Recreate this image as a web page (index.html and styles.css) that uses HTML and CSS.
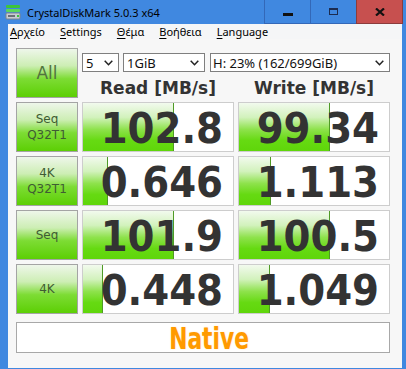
FILE: index.html
```html
<!DOCTYPE html>
<html>
<head>
    <meta charset="utf-8">
    <title>CrystalDiskMark 5.0.3 x64</title>
    <link rel="stylesheet" href="styles.css">
</head>
<body>
    <div class="window">
        <div class="titlebar">
            <svg class="app-icon" width="16" height="16" viewBox="0 0 16 16">
                <rect x="1" y="1" width="14" height="3" rx="1" fill="#3cc43c"/>
                <rect x="1" y="5" width="14" height="3" rx="1" fill="#5ad65a"/>
                <rect x="1" y="9" width="14" height="6" rx="1" fill="#c8cdd2" stroke="#7d848c"/>
                <rect x="3" y="11" width="7" height="2" fill="#6a7078"/>
                <rect x="12" y="11" width="2" height="2" fill="#3cc43c"/>
            </svg>
            <span class="title">CrystalDiskMark 5.0.3 x64</span>
            <div class="caption-buttons">
                <div class="cap-btn"><span class="glyph-min"></span></div>
                <div class="cap-btn"><span class="glyph-max"></span></div>
                <div class="cap-btn close">
                    <svg width="10" height="8" viewBox="0 0 10 8">
                        <path d="M1 0.5 L9 7.5 M9 0.5 L1 7.5" stroke="#111" stroke-width="2.2"/>
                    </svg>
                </div>
            </div>
        </div>

        <div class="menubar">
            <span class="menu-item"><u>Α</u>ρχείο</span>
            <span class="menu-item"><u>S</u>ettings</span>
            <span class="menu-item"><u>Θ</u>έμα</span>
            <span class="menu-item"><u>Β</u>οήθεια</span>
            <span class="menu-item"><u>L</u>anguage</span>
        </div>

        <div class="client">
            <div class="bench">
                <div class="label all">All</div>
                <div class="controls">
                    <div class="combo-row">
                        <div class="combo combo-count">
                            <span>5</span>
                            <svg class="chevron" width="9" height="6" viewBox="0 0 9 6"><polyline points="0.7,0.7 4.5,4.7 8.3,0.7" fill="none" stroke="#222" stroke-width="1.5"/></svg>
                        </div>
                        <div class="combo combo-size">
                            <span>1GiB</span>
                            <svg class="chevron" width="9" height="6" viewBox="0 0 9 6"><polyline points="0.7,0.7 4.5,4.7 8.3,0.7" fill="none" stroke="#222" stroke-width="1.5"/></svg>
                        </div>
                        <div class="combo combo-drive">
                            <span>H: 23% (162/699GiB)</span>
                            <svg class="chevron" width="9" height="6" viewBox="0 0 9 6"><polyline points="0.7,0.7 4.5,4.7 8.3,0.7" fill="none" stroke="#222" stroke-width="1.5"/></svg>
                        </div>
                    </div>
                    <div class="heads">
                        <div class="head">Read [MB/s]</div>
                        <div class="head">Write [MB/s]</div>
                    </div>
                </div>

                <div class="label">Seq<br>Q32T1</div>
                <div class="cell"><div class="bar" style="width: 90px"></div><span class="value">102.8</span></div>
                <div class="cell"><div class="bar" style="width: 90px"></div><span class="value">99.34</span></div>

                <div class="label">4K<br>Q32T1</div>
                <div class="cell"><div class="bar" style="width: 24px"></div><span class="value">0.646</span></div>
                <div class="cell"><div class="bar" style="width: 31px"></div><span class="value">1.113</span></div>

                <div class="label">Seq</div>
                <div class="cell"><div class="bar" style="width: 90px"></div><span class="value">101.9</span></div>
                <div class="cell"><div class="bar" style="width: 90px"></div><span class="value">100.5</span></div>

                <div class="label">4K</div>
                <div class="cell"><div class="bar" style="width: 19px"></div><span class="value">0.448</span></div>
                <div class="cell"><div class="bar" style="width: 30px"></div><span class="value">1.049</span></div>

                <div class="native"><span>Native</span></div>
            </div>
        </div>
    </div>
</body>
</html>
```

FILE: styles.css
```css
body {
    margin: 0;
    font-family: "Noto Sans", sans-serif;
}
.window {
    width: 406px;
    height: 369px;
    box-sizing: border-box;
    background-color: #4088e0;
    padding: 0 4px 4px 8px;
    display: flex;
    flex-direction: column;
}
.titlebar {
    height: 25px;
    margin-left: -8px;
    margin-right: -4px;
    display: flex;
    align-items: center;
}
.app-icon {
    margin-left: 5px;
    margin-top: -1px;
}
.title {
    margin-left: 6px;
    font-size: 11px;
    color: #000;
}
.caption-buttons {
    margin-left: auto;
    margin-right: 3px;
    display: flex;
    align-self: flex-start;
}
.cap-btn {
    width: 45px;
    height: 23px;
    border: 1px solid #3368b8;
    border-top: none;
    margin-left: -1px;
    display: flex;
    align-items: center;
    justify-content: center;
}
.cap-btn.close {
    background-color: #c7504f;
    border-color: #8c3c3c;
}
.glyph-min {
    width: 10px;
    height: 3px;
    margin-top: 5px;
    background-color: #111;
}
.glyph-max {
    width: 7px;
    height: 4px;
    border: 1.5px solid #1c2c50;
    border-top-width: 2px;
}
.menubar {
    height: 20px;
    background-color: #f5f6f7;
    display: flex;
    align-items: center;
    gap: 15px;
    padding-left: 2px;
    font-size: 11px;
    color: #000;
}
.menu-item u {
    text-decoration-thickness: 1px;
    text-underline-offset: 2px;
}
.client {
    flex: 1;
    background-color: #f7f7f7;
    padding: 9px 12px 0 8px;
}
.bench {
    display: grid;
    grid-template-columns: 62px 152px 152px;
    grid-auto-rows: 50px;
    gap: 4px;
}
.label {
    box-sizing: border-box;
    border: 1px solid #a4a4a4;
    background: linear-gradient(#eef6ea 0%, #cdeeb4 35%, #7ddc34 62%, #5ccf04 100%);
    color: #3f5c33;
    font-family: "DejaVu Sans", sans-serif;
    font-size: 12px;
    line-height: 16px;
    text-align: center;
    display: flex;
    align-items: center;
    justify-content: center;
}
.label.all {
    font-size: 17px;
    color: #52743f;
}
.controls {
    grid-column: 2 / 4;
    display: flex;
    flex-direction: column;
}
.combo-row {
    display: flex;
    gap: 4px;
    margin-top: 5px;
}
.combo {
    box-sizing: border-box;
    height: 19px;
    border: 1px solid #7f7f7f;
    background-color: #fff;
    display: flex;
    align-items: center;
    padding-left: 3px;
    font-size: 13px;
    color: #111;
}
.combo .chevron {
    margin-left: auto;
    margin-right: 5px;
}
.combo-count {
    width: 37px;
}
.combo-size {
    width: 82px;
}
.combo-drive {
    flex: 1;
    margin-left: 1px;
    padding-left: 2px;
}
.heads {
    display: grid;
    grid-template-columns: 152px 152px;
    gap: 4px;
    margin-top: 6px;
}
.head {
    text-align: center;
    font-family: "DejaVu Sans", sans-serif;
    font-weight: bold;
    font-size: 17px;
    line-height: 20px;
    color: #333;
}
.cell {
    position: relative;
    box-sizing: border-box;
    border: 1px solid #cdcdcd;
    background-color: #fff;
    text-align: right;
    padding-right: 10px;
}
.bar {
    position: absolute;
    left: 0;
    top: 0;
    bottom: 0;
    border-right: 1px solid #4f9a26;
    background: linear-gradient(#f2faee 0%, #d2f2bc 30%, #8ee24c 55%, #66da12 78%, #5fd60a 100%);
}
.value {
    position: relative;
    display: block;
    height: 48px;
    line-height: 50px;
    font-family: "DejaVu Sans Condensed", "DejaVu Sans", sans-serif;
    font-stretch: condensed;
    font-weight: bold;
    font-size: 43px;
    color: #333;
}
.native {
    grid-column: 1 / 4;
    height: 31px;
    margin-top: 4px;
    box-sizing: border-box;
    border: 1px solid #a8a8a8;
    background-color: #fff;
    text-align: center;
    padding-left: 12px;
    color: #ff9a00;
}
.native span {
    display: inline-block;
    transform: scaleX(0.78);
    font-family: "DejaVu Sans Condensed", "DejaVu Sans", sans-serif;
    font-stretch: condensed;
    font-weight: bold;
    font-size: 31px;
    line-height: 31px;
    text-shadow: 0 0 2px #ffe6c0;
}
```
